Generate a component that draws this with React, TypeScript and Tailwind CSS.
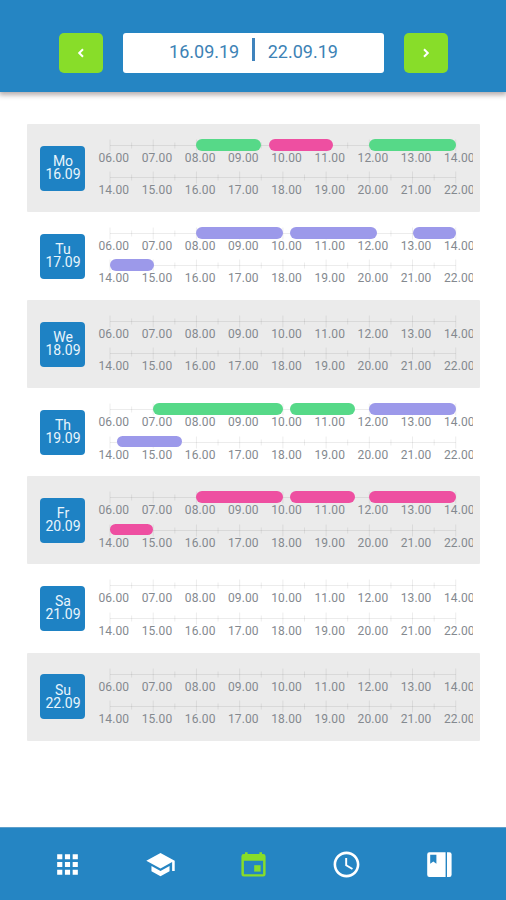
import React from "react";
import { MdAccessTime, MdApps, MdSchool } from "react-icons/md";

const GREEN = "bg-[#56d988]";
const PINK = "bg-[#ee4fa1]";
const VIOLET = "bg-[#9c99ea]";

type Bar = { from: number; to: number; color: string };
type Day = { name: string; date: string; morning: Bar[]; evening: Bar[] };

const days: Day[] = [
  {
    name: "Mo",
    date: "16.09",
    morning: [
      { from: 8, to: 9.5, color: GREEN },
      { from: 9.68, to: 11.17, color: PINK },
      { from: 12, to: 14, color: GREEN },
    ],
    evening: [],
  },
  {
    name: "Tu",
    date: "17.09",
    morning: [
      { from: 8, to: 10, color: VIOLET },
      { from: 10.17, to: 12.17, color: VIOLET },
      { from: 13.02, to: 14, color: VIOLET },
    ],
    evening: [{ from: 14, to: 15.02, color: VIOLET }],
  },
  { name: "We", date: "18.09", morning: [], evening: [] },
  {
    name: "Th",
    date: "19.09",
    morning: [
      { from: 7, to: 10, color: GREEN },
      { from: 10.17, to: 11.66, color: GREEN },
      { from: 12, to: 14, color: VIOLET },
    ],
    evening: [{ from: 14.17, to: 15.67, color: VIOLET }],
  },
  {
    name: "Fr",
    date: "20.09",
    morning: [
      { from: 8, to: 10, color: PINK },
      { from: 10.17, to: 11.66, color: PINK },
      { from: 12, to: 14, color: PINK },
    ],
    evening: [{ from: 14, to: 15, color: PINK }],
  },
  { name: "Sa", date: "21.09", morning: [], evening: [] },
  { name: "Su", date: "22.09", morning: [], evening: [] },
];

const SPAN = 8;
const ticks = Array.from({ length: SPAN * 2 + 1 }, (_, i) => i);

function Timeline({ start, bars }: { start: number; bars: Bar[] }) {
  return (
    <div className="h-[32.3px]">
      <div className="relative ml-[18.5px] h-3 w-[345.8px]">
        <svg className="block overflow-visible" width="345.8" height="12" stroke="#000000" strokeOpacity="0.075" strokeWidth="1">
          <line x1="0" x2="345.8" y1="6.5" y2="6.5" />
          {ticks.map((i) => (
            <line key={i} x1={i * 21.61} x2={i * 21.61} y1={i % 2 ? 3.5 : 0.5} y2={i % 2 ? 9.5 : 12.5} />
          ))}
        </svg>
        {bars.map((bar) => (
          <div
            key={bar.from}
            className={`absolute top-0 h-[11.5px] rounded-full ${bar.color}`}
            style={{
              left: `${((bar.from - start) / SPAN) * 100}%`,
              width: `${((bar.to - bar.from) / SPAN) * 100}%`,
            }}
          />
        ))}
      </div>
      <div className="flex w-[381px] overflow-hidden pl-[0.7px] text-xs leading-[14px] tracking-[0.1px] text-[#84898f]">
        {Array.from({ length: SPAN + 1 }, (_, i) => (
          <span key={i} className="w-[43.2px] shrink-0 text-center">
            {String(start + i).padStart(2, "0")}.00
          </span>
        ))}
      </div>
    </div>
  );
}

function DayRow({ day, shaded }: { day: Day; shaded: boolean }) {
  return (
    <div className={`flex h-[88.1px] rounded-[1px] pl-[13px] ${shaded ? "bg-[#ebebeb]" : "bg-white"}`}>
      <div className="mt-[21.5px] flex h-[45px] w-[45px] shrink-0 flex-col items-center justify-center rounded bg-[#1e82c4] pl-px text-sm leading-[13px] text-[#e9f5fc]">
        <span>{day.name}</span>
        <span>{day.date}</span>
      </div>
      <div className="ml-[6.5px] pt-[15px]">
        <Timeline start={6} bars={day.morning} />
        <Timeline start={14} bars={day.evening} />
      </div>
    </div>
  );
}

function Chevron({ points }: { points: string }) {
  return (
    <svg width="8" height="10" viewBox="0 0 8 10" fill="none" stroke="currentColor" strokeWidth="2" aria-hidden="true">
      <polyline points={points} />
    </svg>
  );
}

function CalendarIcon() {
  return (
    <svg className="text-[#88dd29]" width="31" height="31" viewBox="0 0 31 31" aria-hidden="true">
      <path
        fill="currentColor"
        fillRule="evenodd"
        d="M7 3.2H9.6V5H21.4V3.2H24V5H25.2A2.4 2.4 0 0 1 27.6 7.4V25.2A2.4 2.4 0 0 1 25.2 27.6H5.8A2.4 2.4 0 0 1 3.4 25.2V7.4A2.4 2.4 0 0 1 5.8 5H7ZM5.9 11.8V25.2H25.1V11.8Z"
      />
      <rect x="16.2" y="16.2" width="6.4" height="6.4" fill="currentColor" />
    </svg>
  );
}

function BookIcon() {
  return (
    <svg width="31" height="31" viewBox="0 0 31 31" aria-hidden="true">
      <path
        fill="currentColor"
        fillRule="evenodd"
        d="M5.4 3.2H21.6V28H5.4A2.2 2.2 0 0 1 3.2 25.8V5.4A2.2 2.2 0 0 1 5.4 3.2ZM6.2 5.8V14.8L9.3 12.4L12.4 14.8V5.8Z"
      />
      <path fill="currentColor" d="M23 3.2H25.4A2.2 2.2 0 0 1 27.6 5.4V25.8A2.2 2.2 0 0 1 25.4 28H23Z" />
    </svg>
  );
}

export default function App() {
  return (
    <div className="flex h-[900px] w-[506px] flex-col overflow-hidden bg-white font-['Roboto',sans-serif]">
      <header className="flex h-[92px] shrink-0 items-start bg-[#2585c3] pl-[59px] pt-[33px] shadow-[0_2px_5px_1px_rgba(90,70,70,0.45)]">
        <button className="flex h-[39.5px] w-[44px] items-center justify-center rounded-[5px] bg-[#88dd29] text-white">
          <Chevron points="6,1.2 2.2,5 6,8.8" />
        </button>
        <div className="ml-[20px] flex h-[39.5px] w-[261px] items-start justify-center rounded-[3px] bg-white text-lg leading-[37px] text-[#3d82b5]">
          <span>16.09.19</span>
          <span className="ml-[12.5px] mr-[13px] mt-[5px] h-[23px] w-[3px] bg-[#3f83bd]" />
          <span>22.09.19</span>
        </div>
        <button className="ml-[20px] flex h-[39.5px] w-[44px] items-center justify-center rounded-[5px] bg-[#88dd29] text-white">
          <Chevron points="2,1.2 5.8,5 2,8.8" />
        </button>
      </header>
      <main className="flex-1 pl-[27px] pr-[26px] pt-[32px]">
        {days.map((day, i) => (
          <DayRow key={day.name} day={day} shaded={i % 2 === 0} />
        ))}
      </main>
      <nav className="flex h-[73px] shrink-0 items-center justify-between border-t border-[#5e9fcb] bg-[#2585c3] pl-[52px] pr-[51px] text-white">
        <MdApps size={31} />
        <MdSchool size={31} />
        <CalendarIcon />
        <MdAccessTime size={31} />
        <BookIcon />
      </nav>
    </div>
  );
}
